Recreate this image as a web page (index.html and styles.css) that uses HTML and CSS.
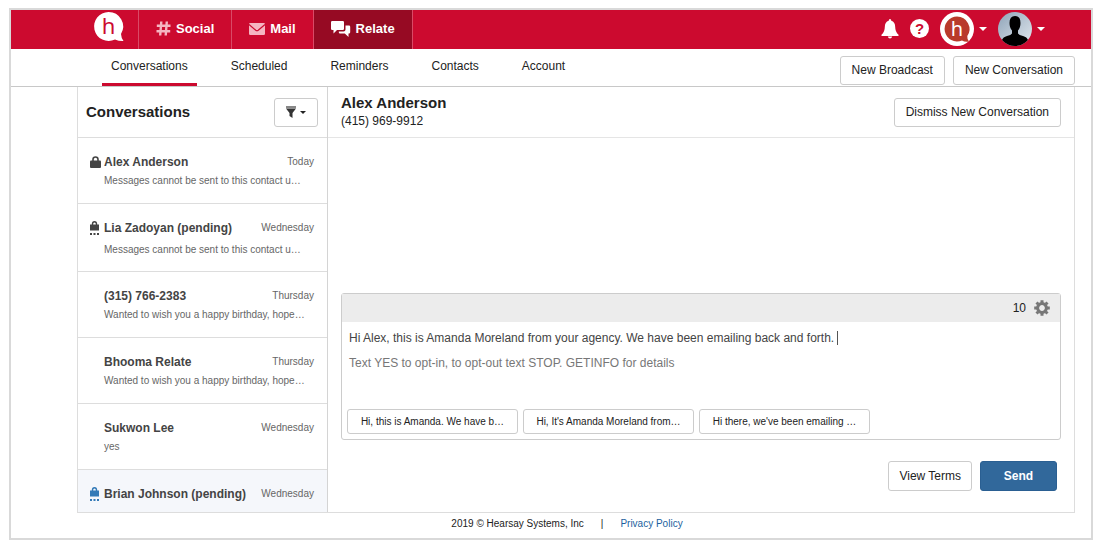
FILE: index.html
```html
<!DOCTYPE html>
<html lang="en">
<head>
    <meta charset="UTF-8">
    <meta name="viewport" content="width=device-width, initial-scale=1.0">
    <title>Relate - Conversations</title>
    <link rel="stylesheet" href="styles.css">
</head>
<body>
    <div class="frame">
        <header class="topbar">
            <a href="#" class="logo" aria-label="Home">
                <svg width="30" height="30" viewBox="0 0 30 30">
                    <path d="M14.5 0A14.500 14.500 0 1 0 21 27.500Q25 29.200 29.500 29Q27.200 26 27 22A14.500 14.500 0 0 0 14.500 0z" fill="#fff"/>
                    <text x="14.500" y="22" text-anchor="middle" class="logo-letter">h</text>
                </svg>
            </a>
            <nav class="tabs">
                <a href="#" class="tab">
                    <svg width="15" height="15" viewBox="0 0 15 15" fill="none" stroke="#f5b5c1" stroke-width="2.400">
                        <path d="M5.300 0.500L4.200 14.500M10.800 0.500L9.700 14.500M0.800 4.700H14.500M0.500 10.300H14.200"/>
                    </svg>
                    Social
                </a>
                <a href="#" class="tab mail">
                    <svg width="16" height="12" viewBox="0 0 16 12">
                        <path d="M0 1.200Q0 0 1.200 0H14.800Q16 0 16 1.200V10.800Q16 12 14.800 12H1.200Q0 12 0 10.800z" fill="#f5b5c1"/>
                        <path d="M0 1.500L6.800 7.300Q8 8.200 9.200 7.300L16 1.500" fill="none" stroke="#cc0a2f" stroke-width="1.200"/>
                    </svg>
                    Mail
                </a>
                <a href="#" class="tab active">
                    <svg width="20" height="16" viewBox="0 0 20 16" fill="#fff">
                        <path d="M1.200 0H11.800Q13 0 13 1.200V7.800Q13 9 11.800 9H6L2.500 12.500V9H1.200Q0 9 0 7.800V1.200Q0 0 1.200 0z"/>
                        <path d="M14.500 4.500H18Q19.200 4.500 19.200 5.700V11.300Q19.200 12.500 18 12.500H17.500V16L13.800 12.500H9Q7.800 12.500 7.800 11.300V10.500H12.500Q14.500 10.500 14.500 8.500z"/>
                    </svg>
                    Relate
                </a>
            </nav>
            <div class="tools">
                <button class="tool" aria-label="Notifications">
                    <svg width="18" height="20" viewBox="0 0 18 20" fill="#fff">
                        <path d="M9 0Q10.300 0 10.300 1.800Q14.200 3 14.200 8Q14.200 13 17.500 15.800V17H0.500V15.800Q3.800 13 3.800 8Q3.800 3 7.700 1.800Q7.700 0 9 0zM6.800 17.600H11.200Q10.700 19.600 9 19.600Q7.300 19.600 6.800 17.600z"/>
                    </svg>
                </button>
                <button class="tool help" aria-label="Help">?</button>
                <button class="tool account" aria-label="Workspace">
                    <svg width="34" height="34" viewBox="0 0 34 34">
                        <circle cx="17" cy="17" r="17" fill="#fff"/>
                        <path d="M17 4.500A12.500 12.500 0 1 0 22 28.500Q25 30.300 29 29.500Q27 27.500 27.300 24A12.500 12.500 0 0 0 17 4.500z" fill="#b93a2b"/>
                        <text x="17" y="24" text-anchor="middle" class="badge-letter">h</text>
                    </svg>
                    <span class="caret"></span>
                </button>
                <button class="tool account" aria-label="Profile">
                    <svg width="34" height="34" viewBox="0 0 34 34">
                        <defs>
                            <linearGradient id="sky" x1="0" y1="0" x2="1" y2="1">
                                <stop offset="0" stop-color="#8ea3b8"/>
                                <stop offset="1" stop-color="#e3e9ef"/>
                            </linearGradient>
                            <clipPath id="round"><circle cx="17" cy="17" r="17"/></clipPath>
                        </defs>
                        <g clip-path="url(#round)">
                            <rect width="34" height="34" fill="url(#sky)"/>
                            <path d="M17 4Q22.500 4 22.500 11Q22.500 16 20 18.500V21.500Q21 23 25 24Q29 25 30 28V34H4V28Q5 25 9 24Q13 23 14 21.500V18.500Q11.500 16 11.500 11Q11.500 4 17 4z" fill="#000"/>
                        </g>
                    </svg>
                    <span class="caret"></span>
                </button>
            </div>
        </header>

        <div class="subbar">
            <nav class="subnav">
                <a href="#" class="current">Conversations</a>
                <a href="#">Scheduled</a>
                <a href="#">Reminders</a>
                <a href="#">Contacts</a>
                <a href="#">Account</a>
            </nav>
            <div class="subbar-actions">
                <button class="btn">New Broadcast</button>
                <button class="btn">New Conversation</button>
            </div>
        </div>

        <div class="workspace">
            <aside class="sidebar">
                <div class="sidebar-head">
                    <h1>Conversations</h1>
                    <button class="btn filter" aria-label="Filter">
                        <svg width="10" height="12" viewBox="0 0 10 12">
                            <path d="M0 2.500H10L6.500 7V12L3.500 10V7z" fill="#333"/>
                            <rect width="10" height="2.500" fill="#888"/>
                        </svg>
                        <span class="caret"></span>
                    </button>
                </div>
                <ul class="list">
                    <li class="item">
                        <svg class="lock" width="11" height="12" viewBox="0 0 11 12">
                            <path d="M3 5V3.500Q3 1 5.500 1Q8 1 8 3.500V5" fill="none" stroke="currentColor" stroke-width="1.600"/>
                            <rect y="4.500" width="11" height="7.500" rx="1" fill="currentColor"/>
                        </svg>
                        <span class="name">Alex Anderson</span>
                        <span class="day">Today</span>
                        <p class="preview">Messages cannot be sent to this contact u…</p>
                    </li>
                    <li class="item pending">
                        <svg class="lock" width="9" height="14" viewBox="0 0 9 14">
                            <path d="M2.500 4V3Q2.500 0.800 4.500 0.800Q6.500 0.800 6.500 3V4" fill="none" stroke="currentColor" stroke-width="1.400"/>
                            <path d="M0 3.500H9V9.500H0zM0 12H2V14H0zM3.500 12H5.500V14H3.500zM7 12H9V14H7z" fill="currentColor"/>
                        </svg>
                        <span class="name">Lia Zadoyan (pending)</span>
                        <span class="day">Wednesday</span>
                        <p class="preview">Messages cannot be sent to this contact u…</p>
                    </li>
                    <li class="item">
                        <span class="name">(315) 766-2383</span>
                        <span class="day">Thursday</span>
                        <p class="preview">Wanted to wish you a happy birthday, hope…</p>
                    </li>
                    <li class="item">
                        <span class="name">Bhooma Relate</span>
                        <span class="day">Thursday</span>
                        <p class="preview">Wanted to wish you a happy birthday, hope…</p>
                    </li>
                    <li class="item">
                        <span class="name">Sukwon Lee</span>
                        <span class="day">Wednesday</span>
                        <p class="preview">yes</p>
                    </li>
                    <li class="item pending unread">
                        <svg class="lock" width="9" height="14" viewBox="0 0 9 14">
                            <path d="M2.500 4V3Q2.500 0.800 4.500 0.800Q6.500 0.800 6.500 3V4" fill="none" stroke="currentColor" stroke-width="1.400"/>
                            <path d="M0 3.500H9V9.500H0zM0 12H2V14H0zM3.500 12H5.500V14H3.500zM7 12H9V14H7z" fill="currentColor"/>
                        </svg>
                        <span class="name">Brian Johnson (pending)</span>
                        <span class="day">Wednesday</span>
                    </li>
                </ul>
            </aside>

            <main class="thread">
                <div class="thread-head">
                    <div class="contact">
                        <h2>Alex Anderson</h2>
                        <p>(415) 969-9912</p>
                    </div>
                    <button class="btn">Dismiss New Conversation</button>
                </div>
                <div class="composer">
                    <div class="composer-bar">
                        <span>10</span>
                        <button class="gear" aria-label="Settings">
                            <svg width="16" height="16" viewBox="-8 -8 16 16">
                                <circle r="4.400" fill="none" stroke="#777" stroke-width="3"/>
                                <path d="M0 -7.800V-5M0 7.800V5M-7.800 0H-5M7.800 0H5M-5.500 -5.500L-3.700 -3.700M5.500 5.500L3.700 3.700M-5.500 5.500L-3.700 3.700M5.500 -5.500L3.700 -3.700" stroke="#777" stroke-width="3"/>
                            </svg>
                        </button>
                    </div>
                    <div class="message">
                        <textarea rows="1" aria-label="Message">Hi Alex, this is Amanda Moreland from your agency. We have been emailing back and forth. </textarea>
                        <span class="cursor"></span>
                        <p>Text YES to opt-in, to opt-out text STOP. GETINFO for details</p>
                    </div>
                    <div class="suggestions">
                        <button>Hi, this is Amanda. We have b…</button>
                        <button>Hi, It's Amanda Moreland from…</button>
                        <button>Hi there, we've been emailing …</button>
                    </div>
                </div>
                <div class="send-row">
                    <button class="btn">View Terms</button>
                    <button class="btn send">Send</button>
                </div>
            </main>
        </div>

        <footer class="footer">
            <span>2019 © Hearsay Systems, Inc</span>
            <span>|</span>
            <a href="#">Privacy Policy</a>
        </footer>
    </div>
</body>
</html>
```
FILE: styles.css
```css
* {
    box-sizing: border-box;
}
body {
    margin: 0;
    padding: 8px 8px 10px 9px;
    height: 100vh;
    background: #fff;
    color: #222;
    font-family: "Liberation Sans", Arial, sans-serif;
    font-size: 12px;
    line-height: 16px;
}
h1, h2, p, ul {
    margin: 0;
    padding: 0;
}
a {
    color: inherit;
    text-decoration: none;
}
button {
    font: inherit;
    color: inherit;
    cursor: pointer;
}
svg {
    display: block;
    flex: none;
    overflow: visible;
}
.frame {
    display: flex;
    flex-direction: column;
    height: 100%;
    border: 2px solid #d9d9d9;
}

/* top bar */
.topbar {
    display: flex;
    flex: none;
    height: 39px;
    background: #cc0a2f;
    color: #fff;
}
.logo {
    padding: 2px 14px 0 83px;
}
.logo-letter {
    font: 22px "Noto Sans", sans-serif;
    fill: #cc0a2f;
}
.badge-letter {
    font: 20px "Noto Sans", sans-serif;
    fill: #fff;
}
.tabs {
    display: flex;
    border-right: 1px solid #d94a66;
}
.tab {
    display: flex;
    align-items: center;
    gap: 5px;
    padding: 0 17px 2px;
    border-left: 1px solid #d94a66;
    font-size: 13px;
    font-weight: bold;
}
.tab.active {
    background: #960a23;
}
.tools {
    display: flex;
    align-items: center;
    gap: 11px;
    margin-left: auto;
    padding: 0 46px 2px 0;
}
.tool {
    display: flex;
    align-items: center;
    gap: 5px;
    padding: 0;
    border: none;
    background: none;
}
.help {
    justify-content: center;
    width: 19px;
    height: 19px;
    border-radius: 50%;
    background: #fff;
    color: #cc0a2f;
    font-size: 15px;
    font-weight: bold;
}
.caret {
    border: 4px solid transparent;
    border-top-color: currentColor;
    border-bottom: none;
}

/* sub navigation */
.subbar {
    display: flex;
    flex: none;
    justify-content: space-between;
    height: 38px;
    padding: 0 16px 0 91px;
    border-bottom: 1px solid #c8c8c8;
}
.subnav {
    display: flex;
    gap: 25px;
}
.subnav a {
    padding: 9px 9px 0;
}
.subnav .current {
    border-bottom: 3px solid #cc0a2f;
}
.subbar-actions {
    display: flex;
    align-items: center;
    gap: 8px;
    padding-top: 5px;
}
.btn {
    height: 29px;
    padding: 0 11px;
    border: 1px solid #ccc;
    border-radius: 3px;
    background: #fff;
    white-space: nowrap;
}

/* conversation list */
.workspace {
    display: flex;
    flex: 1;
    min-height: 0;
    margin: 0 16px 0 66px;
    border: 1px solid #ddd;
    border-top: none;
}
.sidebar {
    display: flex;
    flex-direction: column;
    width: 250px;
    border-right: 1px solid #d4d4d4;
}
.sidebar-head {
    display: flex;
    flex: none;
    align-items: center;
    justify-content: space-between;
    height: 51px;
    padding: 0 9px 0 8px;
    border-bottom: 1px solid #ddd;
}
h1, h2 {
    font-size: 15px;
    line-height: 20px;
}
.filter {
    display: flex;
    align-items: center;
    gap: 4px;
}
.filter .caret {
    border-width: 3px 3px 0;
}
.list {
    flex: 1;
    overflow: hidden;
    list-style: none;
}
.item {
    display: grid;
    grid-template-columns: 14px 1fr auto;
    align-content: start;
    row-gap: 3px;
    height: 66px;
    padding: 16px 13px 0 12px;
    border-bottom: 1px solid #ddd;
}
.pending {
    row-gap: 6px;
    height: 68px;
}
.unread {
    background: #f5f7fb;
}
.lock {
    grid-column: 1;
    align-self: center;
    color: #444;
}
.unread .lock {
    color: #337ab7;
}
.name {
    grid-column: 2;
    color: #444;
    font-weight: bold;
}
.day {
    color: #666;
    font-size: 10px;
}
.preview {
    grid-column: 2 / 4;
    color: #666;
    font-size: 10px;
    white-space: nowrap;
}

/* thread */
.thread {
    display: flex;
    flex: 1;
    flex-direction: column;
    min-width: 0;
}
.thread-head {
    display: flex;
    align-items: center;
    justify-content: space-between;
    height: 51px;
    padding: 0 13px;
    border-bottom: 1px solid #e5e5e5;
}
.contact {
    padding-bottom: 3px;
}
.composer {
    margin: auto 13px 0;
    border: 1px solid #ccc;
    border-radius: 3px;
}
.composer-bar {
    display: flex;
    align-items: center;
    justify-content: flex-end;
    gap: 8px;
    height: 28px;
    padding-right: 10px;
    background: #ececec;
}
.gear {
    padding: 0;
    border: none;
    background: none;
}
.message {
    position: relative;
    height: 87px;
    padding: 7px 7px 0;
    color: #777;
}
.message textarea {
    display: block;
    width: 100%;
    height: 18px;
    margin-bottom: 8px;
    padding: 0;
    border: none;
    outline: none;
    overflow: hidden;
    resize: none;
    color: #444;
    font: inherit;
    line-height: 18px;
}
.cursor {
    position: absolute;
    top: 9px;
    left: 495px;
    height: 14px;
    border-left: 1px solid #555;
}
.suggestions {
    display: flex;
    gap: 5px;
    padding: 0 5px 5px;
}
.suggestions button {
    width: 171px;
    height: 25px;
    padding: 0;
    border: 1px solid #ccc;
    border-radius: 3px;
    background: #fff;
    font-size: 10px;
    white-space: nowrap;
}
.send-row {
    display: flex;
    justify-content: flex-end;
    gap: 8px;
    padding: 21px 17px;
}
.send-row .btn {
    height: 30px;
    padding: 0 10px;
}
.send-row .send {
    width: 77px;
    border-color: #2a5f92;
    background: #31689b;
    color: #fff;
    font-weight: bold;
}

/* footer */
.footer {
    display: flex;
    align-items: center;
    justify-content: center;
    gap: 17px;
    height: 25px;
    padding: 0 0 3px 32px;
    font-size: 10px;
}
.footer a {
    color: #1c5f9e;
}
```
